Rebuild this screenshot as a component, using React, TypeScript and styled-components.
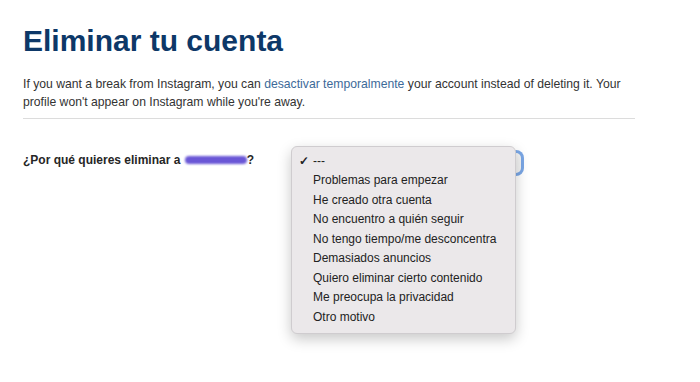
import styled, { createGlobalStyle } from "styled-components";

const reasons = [
  "---",
  "Problemas para empezar",
  "He creado otra cuenta",
  "No encuentro a quién seguir",
  "No tengo tiempo/me desconcentra",
  "Demasiados anuncios",
  "Quiero eliminar cierto contenido",
  "Me preocupa la privacidad",
  "Otro motivo",
];

const Global = createGlobalStyle`
  html, body {
    margin: 0;
    padding: 0;
    background: #ffffff;
  }
  body {
    font-family: "Liberation Sans", Arial, sans-serif;
    color: #262626;
  }
`;

export default function App() {
  return (
    <>
      <Global />
      <Page>
        <Title>Eliminar tu cuenta</Title>
        <Intro>
          If you want a break from Instagram, you can{" "}
          <Link href="#">desactivar temporalmente</Link> your account instead of
          deleting it. Your profile won't appear on Instagram while you're away.
        </Intro>
        <Divider />
        <ReasonRow>
          <Question>
            ¿Por qué quieres eliminar a <Redacted aria-label="usuario oculto" />?
          </Question>
          <SelectWrap>
            <SelectBox />
            <Menu>
              {reasons.map((r, i) => (
                <MenuItem key={r}>
                  <Check>{i === 0 ? "✓" : ""}</Check>
                  {r}
                </MenuItem>
              ))}
            </Menu>
          </SelectWrap>
        </ReasonRow>
      </Page>
    </>
  );
}

const Page = styled.div`
  width: 635px;
  min-height: 382px;
  box-sizing: border-box;
  padding: 22px 0 0 23px;
`;

const Title = styled.h1`
  margin: 0;
  font-family: "Liberation Sans", Arial, sans-serif;
  font-size: 30px;
  font-weight: 700;
  color: #0d3868;
  line-height: 38px;
`;

const Intro = styled.p`
  margin: 15px 0 0;
  font-size: 12.2px;
  line-height: 18px;
  color: #333333;
`;

const Link = styled.a`
  color: #3d6a99;
  text-decoration: none;
`;

const Divider = styled.hr`
  margin: 7px 0 0;
  border: 0;
  border-top: 1px solid #dcdcdc;
`;

const ReasonRow = styled.div`
  display: flex;
  align-items: flex-start;
  margin-top: 31px;
`;

const Question = styled.div`
  width: 268px;
  padding-top: 3px;
  font-size: 12px;
  font-weight: 700;
  color: #262626;
`;

const Redacted = styled.span`
  display: inline-block;
  background: #5a45d2;
  border-radius: 6px;
  height: 8px;
  width: 62px;
  margin-left: 1px;
  vertical-align: 0;
  filter: blur(1.3px);
  opacity: 0.9;
`;

const SelectWrap = styled.div`
  position: relative;
  width: 232px;
`;

const SelectBox = styled.div`
  position: absolute;
  left: 10px;
  top: 3px;
  width: 220px;
  height: 20px;
  border-radius: 5px;
  background: #f4f4f4;
  box-shadow: 0 0 0 3px #7aa7e6;
`;

const Menu = styled.div`
  position: relative;
  z-index: 1;
  margin-top: -4px;
  width: 225px;
  padding: 4px 0 6px;
  background: #ebe8ea;
  border: 1px solid #cfcccf;
  border-radius: 6px;
  box-shadow: 0 5px 14px rgba(0, 0, 0, 0.22);
  box-sizing: border-box;
`;

const MenuItem = styled.div`
  display: flex;
  align-items: center;
  height: 19.5px;
  font-family: "Liberation Sans", Arial, sans-serif;
  font-size: 12px;
  color: #222222;
`;

const Check = styled.span`
  width: 21px;
  padding-left: 7px;
  box-sizing: border-box;
  font-size: 12px;
  font-weight: 700;
`;
